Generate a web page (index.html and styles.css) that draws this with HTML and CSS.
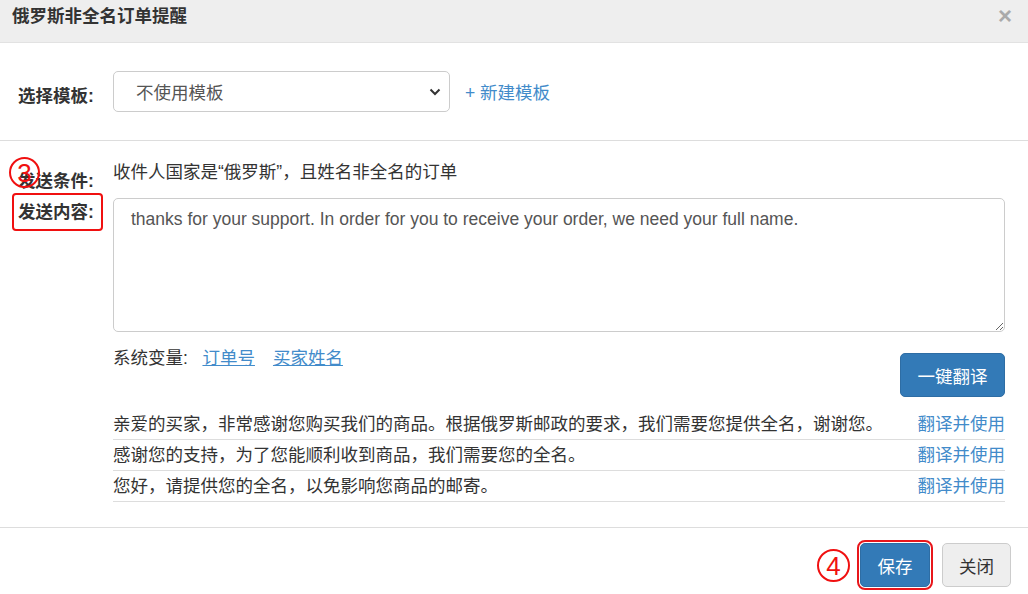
FILE: index.html
```html
<!DOCTYPE html>
<html lang="zh-CN">
<head>
<meta charset="UTF-8">
<title>俄罗斯非全名订单提醒</title>
<link rel="stylesheet" href="styles.css">
</head>
<body>
  <div class="modal">
    <div class="modal-header">
      <span class="modal-title">俄罗斯非全名订单提醒</span>
      <span class="close">&times;</span>
    </div>

    <div class="tpl-row">
      <span class="label">选择模板:</span>
      <div class="select">
        <span>不使用模板</span>
        <svg class="chevron" width="12" height="8" viewBox="0 0 12 8"><path d="M1.5 1.5 L6 6 L10.5 1.5" fill="none" stroke="#333" stroke-width="2"/></svg>
      </div>
      <a class="link new-tpl">+ 新建模板</a>
    </div>

    <div class="content">
      <div class="row">
        <span class="label cond-label">发送条件:<span class="mark-circle mark-3">3</span></span>
        <span class="cond-text">收件人国家是“俄罗斯”，且姓名非全名的订单</span>
      </div>
      <div class="row">
        <span class="label body-label">发送内容:<span class="mark-box"></span></span>
        <textarea class="msg">thanks for your support. In order for you to receive your order, we need your full name.</textarea>
      </div>
      <div class="row">
        <span class="label"></span>
        <div class="vars">
          <span class="vars-text">系统变量:&nbsp;&nbsp;&nbsp;<a class="link u">订单号</a><a class="link u">买家姓名</a></span>
          <button class="btn btn-primary translate">一键翻译</button>
        </div>
      </div>
      <div class="row">
        <span class="label"></span>
        <div class="suggest">
          <div class="sug-item"><span>亲爱的买家，非常感谢您购买我们的商品。根据俄罗斯邮政的要求，我们需要您提供全名，谢谢您。</span><a class="link">翻译并使用</a></div>
          <div class="sug-item"><span>感谢您的支持，为了您能顺利收到商品，我们需要您的全名。</span><a class="link">翻译并使用</a></div>
          <div class="sug-item"><span>您好，请提供您的全名，以免影响您商品的邮寄。</span><a class="link">翻译并使用</a></div>
        </div>
      </div>
    </div>

    <div class="modal-footer">
      <span class="mark-circle mark-4">4</span>
      <button class="btn btn-primary save">保存</button>
      <button class="btn btn-default">关闭</button>
    </div>
  </div>
</body>
</html>
```

FILE: styles.css
```css
body {
  margin: 0;
  font-family: "Liberation Sans", "Noto Sans CJK SC", sans-serif;
  font-size: 17.5px;
  color: #333;
  background: #fff;
}
.modal {
  width: 1028px;
  height: 594px;
  overflow: hidden;
}
.modal-header {
  height: 43px;
  box-sizing: border-box;
  background: #eee;
  border-bottom: 1px solid #e2e2e2;
  display: flex;
  justify-content: space-between;
  padding: 5px 16px 0 12px;
  line-height: 22px;
}
.modal-title {
  font-weight: bold;
  font-size: 17.5px;
}
.close {
  color: #aaa;
  font-size: 24px;
  font-weight: bold;
  line-height: 22px;
}
.label {
  width: 95px;
  flex: none;
  font-weight: bold;
  line-height: 22px;
  position: relative;
}
.tpl-row {
  display: flex;
  align-items: center;
  padding: 28px 0 28px 18px;
  border-bottom: 1px solid #ddd;
}
.tpl-row .label {
  padding-top: 8px;
}
.select {
  width: 337px;
  height: 41px;
  box-sizing: border-box;
  border: 1px solid #ccc;
  border-radius: 5px;
  display: flex;
  align-items: center;
  justify-content: space-between;
  padding: 0 8px 0 22px;
  color: #555;
}
.link {
  color: #428bca;
  text-decoration: none;
  cursor: pointer;
}
.link.u {
  text-decoration: underline;
  margin-right: 18px;
}
.new-tpl {
  margin-left: 15px;
}
.content {
  padding: 20px 23px 25px 18px;
  border-bottom: 1px solid #ddd;
}
.row {
  display: flex;
  align-items: flex-start;
}
.cond-label {
  padding-top: 9px;
}
.cond-text {
  line-height: 22px;
}
.body-label {
  padding-top: 9px;
}
.msg {
  flex: 1;
  margin: 6px 0 0 0;
  height: 134px;
  box-sizing: border-box;
  border: 1px solid #ccc;
  border-radius: 5px;
  padding: 8px 17px;
  font-family: "Liberation Sans", "Noto Sans CJK SC", sans-serif;
  font-size: 17.5px;
  color: #555;
  line-height: 24px;
  resize: vertical;
}
.vars {
  flex: 1;
  display: flex;
  justify-content: space-between;
  align-items: flex-start;
  margin-top: 15px;
}
.vars-text {
  line-height: 22px;
}
.btn {
  font-family: "Liberation Sans", "Noto Sans CJK SC", sans-serif;
  font-size: 17.5px;
  border-radius: 5px;
  cursor: pointer;
  height: 44px;
}
.btn-primary {
  background: #337ab7;
  border: 1px solid #2e6da4;
  color: #fff;
}
.btn-default {
  background: #eee;
  border: 1px solid #ccc;
  color: #333;
  width: 69px;
}
.translate {
  width: 105px;
  margin-top: 6px;
}
.suggest {
  flex: 1;
  margin-top: 12px;
}
.sug-item {
  display: flex;
  justify-content: space-between;
  line-height: 30px;
  border-bottom: 1px solid #ddd;
}
.modal-footer {
  display: flex;
  justify-content: flex-end;
  align-items: center;
  padding: 15px 17px 0 0;
}
.save {
  width: 70px;
  outline: 2px solid #e8161b;
  outline-offset: 1px;
  margin-right: 12px;
}
.mark-circle {
  width: 31px;
  height: 31px;
  box-sizing: border-box;
  border: 2px solid #f01010;
  border-radius: 50%;
  color: #f01010;
  font-family: "Liberation Sans", sans-serif;
  font-weight: normal;
  font-size: 26px;
  line-height: 28px;
  text-align: center;
}
.mark-3 {
  position: absolute;
  left: -9px;
  top: -4px;
}
.mark-4 {
  margin-right: 10px;
  width: 33px;
  height: 33px;
  line-height: 30px;
}
.mark-box {
  position: absolute;
  left: -6px;
  top: 1px;
  width: 91px;
  height: 38px;
  box-sizing: border-box;
  border: 2px solid #f01010;
  border-radius: 4px;
}
```
